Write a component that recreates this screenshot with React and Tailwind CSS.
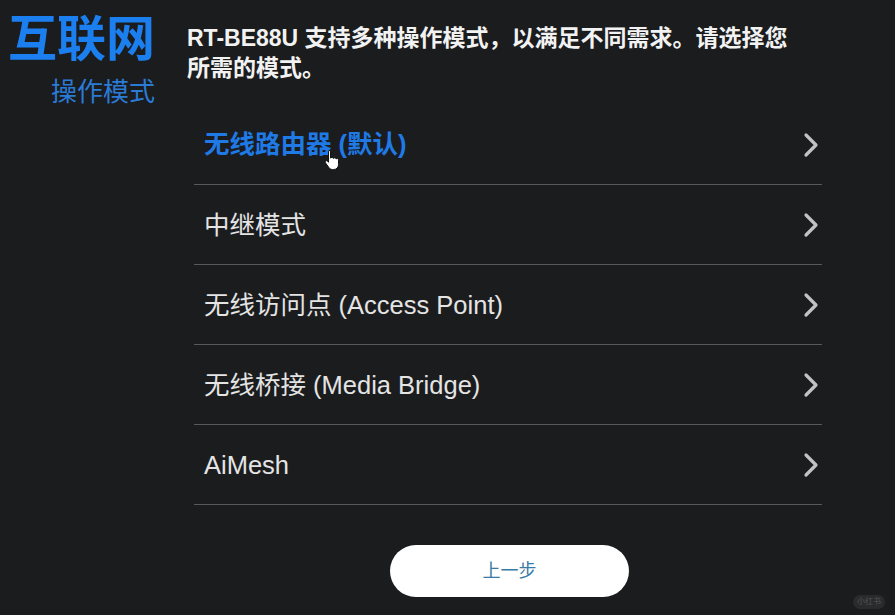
import React from "react";

const modes = [
  { label: "无线路由器 (默认)", active: true },
  { label: "中继模式" },
  { label: "无线访问点 (Access Point)" },
  { label: "无线桥接 (Media Bridge)" },
  { label: "AiMesh" },
];

function Chevron() {
  return (
    <svg width="18" height="26" viewBox="0 0 18 26" fill="none">
      <polyline points="4,3 14,13 4,23" stroke="#c2c2c2" strokeWidth="3.2" strokeLinecap="round" strokeLinejoin="round" />
    </svg>
  );
}

function HandCursor() {
  return (
    <svg width="16" height="22" viewBox="0 0 16 22" className="absolute left-[120px] top-[24px]">
      <path
        d="M5 1.5c.9 0 1.5.6 1.5 1.5v6.2c.3-.5.8-.8 1.4-.8.7 0 1.2.4 1.4 1 .3-.4.8-.6 1.3-.6.7 0 1.2.4 1.4 1 .3-.2.6-.3 1-.3.9 0 1.5.7 1.5 1.6v4.4c0 2.9-2 5-4.8 5H8.5c-1.5 0-2.7-.7-3.6-1.9L1.6 14c-.5-.7-.4-1.5.2-2 .6-.4 1.4-.3 1.9.3l.8 1V3c0-.9.6-1.5 1.5-1.5z"
        fill="#ffffff"
        stroke="#111"
        strokeWidth="1"
      />
    </svg>
  );
}

export default function App() {
  return (
    <div className="relative w-[895px] h-[615px] overflow-hidden bg-[#1b1c1e] font-['Liberation_Sans','Noto_Sans_CJK_SC',sans-serif]">
      <div className="flex">
        <div className="w-[155px] shrink-0 pt-[10px] text-right">
          <div className="text-[49px] leading-[58px] font-bold text-[#1c7ff0]">互联网</div>
          <div className="mt-[9px] text-[26px] leading-[30px] text-[#2a7bd6]">操作模式</div>
        </div>
        <div className="ml-[32px] pt-[23px]">
          <h1 className="text-[23px] leading-[30px] font-bold text-[#f2f2f2]">
            RT-BE88U 支持多种操作模式，以满足不同需求。请选择您
            <br />
            所需的模式。
          </h1>
          <div className="mt-[22px] ml-[7px] w-[628px]">
            {modes.map((m) => (
              <div key={m.label} className="flex h-[80px] items-center justify-between border-b border-[#58595b] pl-[10px] pr-[2px]">
                <span
                  className={
                    m.active
                      ? "relative text-[25.5px] font-bold text-[#1f7ae6]"
                      : "pt-[2px] text-[25.5px] text-[#e4e4e4]"
                  }
                >
                  {m.label}
                  {m.active && <HandCursor />}
                </span>
                <Chevron />
              </div>
            ))}
          </div>
          <div className="mt-[40px] ml-[203px]">
            <button className="h-[52px] w-[239px] rounded-full bg-white text-[18px] text-[#3a7aa6]">上一步</button>
          </div>
        </div>
      </div>
      <div className="absolute right-[10px] bottom-[6px] rounded-full bg-[#2a2b2d] px-[4px] text-[8px] leading-[14px] text-[#555]">小红书</div>
    </div>
  );
}
